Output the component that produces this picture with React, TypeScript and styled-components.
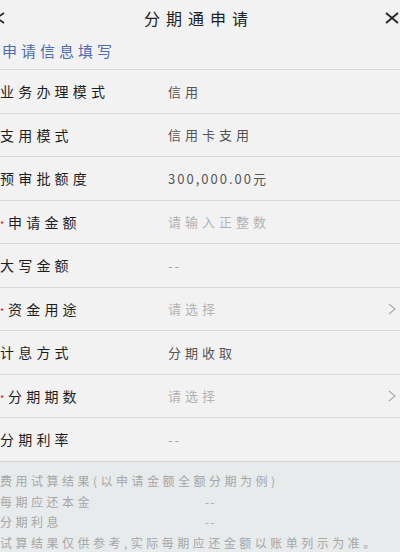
import React from 'react';
import styled, { createGlobalStyle } from 'styled-components';

const GlobalStyle = createGlobalStyle`
  html, body {
    margin: 0;
    padding: 0;
    background-color: #f2f2f2;
    font-family: "Noto Sans CJK SC", "Noto Sans", sans-serif;
  }
`;

const Page = styled.div`
  width: 400px;
  height: 552px;
  overflow: hidden;
  background-color: #f2f2f2;
`;

const Header = styled.header`
  height: 36px;
  display: flex;
  align-items: center;
  justify-content: space-between;
`;

const Title = styled.h1`
  margin: 0 0 0 8px;
  font-size: 16px;
  font-weight: 400;
  letter-spacing: 6px;
  color: #222;
`;

const IconButton = styled.span<{ $shift?: number }>`
  display: flex;
  align-items: center;
  margin-left: ${({ $shift }) => $shift ?? 0}px;
`;

const SectionTitle = styled.div`
  height: 34px;
  box-sizing: border-box;
  padding: 0 0 4px 2px;
  display: flex;
  align-items: center;
  font-size: 15px;
  letter-spacing: 4px;
  color: #4a6db3;
  border-bottom: 1px solid #d8d8d8;
`;

const Row = styled.div`
  height: 43.5px;
  box-sizing: border-box;
  display: flex;
  align-items: center;
  border-bottom: 1px solid #d8d8d8;
`;

const Label = styled.div`
  width: 168px;
  flex-shrink: 0;
  display: flex;
  align-items: center;
  font-size: 14px;
  letter-spacing: 4.2px;
  color: #1e1e1e;
`;

const Star = styled.span`
  width: 8px;
  padding-top: 5px;
  color: #c8102e;
  font-size: 9px;
  line-height: 1;
  letter-spacing: 0;
`;

const Value = styled.div<{ $tone: 'value' | 'hint' | 'dash'; $tight?: boolean }>`
  flex-grow: 1;
  font-size: 13px;
  letter-spacing: ${({ $tight }) => ($tight ? '2px' : '4px')};
  color: ${({ $tone }) =>
    $tone === 'value' ? '#555' : $tone === 'hint' ? '#b2b2b2' : '#a8a8a8'};
`;

const Chevron = styled.span`
  display: flex;
  align-items: center;
  padding-right: 3px;
`;

const CalcPanel = styled.section`
  flex-grow: 1;
  min-height: 100px;
  background-color: #e8ebec;
  padding-top: 9px;
`;

const CalcLine = styled.div`
  height: 20.5px;
  display: flex;
  align-items: center;
  font-size: 12px;
  letter-spacing: 3.5px;
  color: #a6a6a6;
  white-space: nowrap;
`;

const CalcKey = styled.span`
  width: 205px;
  flex-shrink: 0;
`;

const CalcValue = styled.span`
  letter-spacing: 1px;
`;

type Field = {
  label: string;
  value: string;
  tone: 'value' | 'hint' | 'dash';
  required?: boolean;
  select?: boolean;
};

const fields: Field[] = [
  { label: '业务办理模式', value: '信用', tone: 'value' },
  { label: '支用模式', value: '信用卡支用', tone: 'value' },
  { label: '预审批额度', value: '300,000.00元', tone: 'value' },
  { label: '申请金额', value: '请输入正整数', tone: 'hint', required: true },
  { label: '大写金额', value: '--', tone: 'dash' },
  { label: '资金用途', value: '请选择', tone: 'hint', required: true, select: true },
  { label: '计息方式', value: '分期收取', tone: 'value' },
  { label: '分期期数', value: '请选择', tone: 'hint', required: true, select: true },
  { label: '分期利率', value: '--', tone: 'dash' },
];

const isLatin = (s: string) => /[0-9-]/.test(s);

export default function App() {
  return (
    <Page>
      <GlobalStyle />
      <Header>
        <IconButton $shift={-7}>
          <svg width="13" height="14" viewBox="0 0 13 14">
            <polyline points="11,2 4,7 11,12" fill="none" stroke="#222" strokeWidth="1.6" />
          </svg>
        </IconButton>
        <Title>分期通申请</Title>
        <IconButton>
          <svg width="16" height="14" viewBox="0 0 16 14">
            <path d="M2 2 L14 12 M14 2 L2 12" stroke="#222" strokeWidth="1.8" fill="none" />
          </svg>
        </IconButton>
      </Header>
      <SectionTitle>申请信息填写</SectionTitle>
      {fields.map((f) => (
        <Row key={f.label}>
          <Label>
            {f.required && <Star>*</Star>}
            {f.label}
          </Label>
          <Value $tone={f.tone} $tight={isLatin(f.value)}>
            {f.value}
          </Value>
          {f.select && (
            <Chevron>
              <svg width="10" height="12" viewBox="0 0 10 12">
                <polyline points="2,1 8,6 2,11" fill="none" stroke="#a8a8a8" strokeWidth="1.1" />
              </svg>
            </Chevron>
          )}
        </Row>
      ))}
      <CalcPanel>
        <CalcLine>费用试算结果(以申请金额全额分期为例)</CalcLine>
        <CalcLine>
          <CalcKey>每期应还本金</CalcKey>
          <CalcValue>--</CalcValue>
        </CalcLine>
        <CalcLine>
          <CalcKey>分期利息</CalcKey>
          <CalcValue>--</CalcValue>
        </CalcLine>
        <CalcLine>试算结果仅供参考,实际每期应还金额以账单列示为准。</CalcLine>
        <CalcLine>
          <CalcKey>近似折算年化利率(单利)</CalcKey>
          <CalcValue>--</CalcValue>
        </CalcLine>
      </CalcPanel>
    </Page>
  );
}
